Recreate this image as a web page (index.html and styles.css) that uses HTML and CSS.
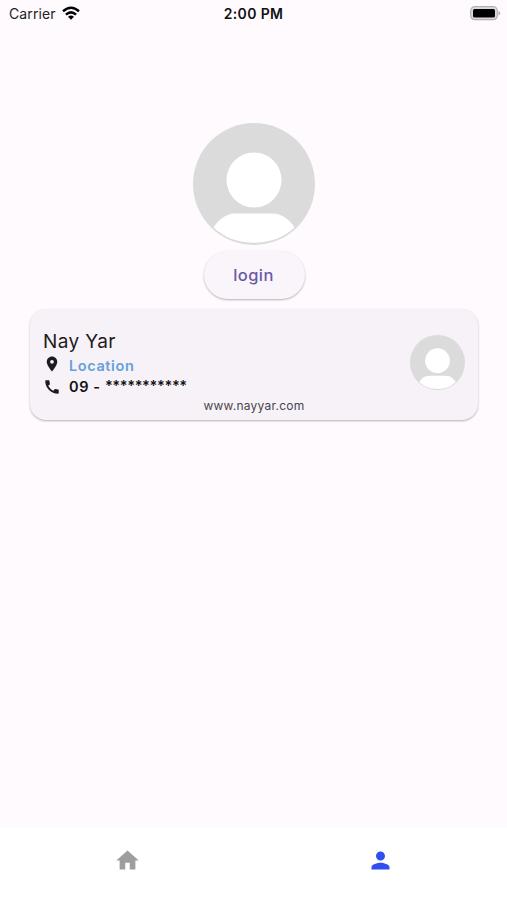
FILE: index.html
```html
<!DOCTYPE html>
<html lang="en">
<head>
<meta charset="utf-8">
<title>Profile</title>
<link rel="stylesheet" href="styles.css">
</head>
<body>
<svg class="defs" width="0" height="0" aria-hidden="true">
  <symbol id="avatar" viewBox="0 0 122 122">
    <circle cx="61" cy="61" r="61" fill="#dadbda"/>
    <circle cx="61" cy="57" r="27.500" fill="#fff"/>
    <path fill="#fff" d="M20.500 104.500C25 97 33 90.500 42 90.500H80C89 90.500 97 97 101.500 104.500C91 114.500 77 119.800 61 119.800S31 114.500 20.500 104.500Z"/>
  </symbol>
</svg>
<div class="screen">
  <header class="status">
    <div class="carrier"><span>Carrier</span>
      <svg class="wifi" viewBox="0 0 18 14"><g fill="none" stroke="#000" stroke-width="2.500"><path d="M1 5.200Q9-1.700 17 5.200"/><path d="M3.900 8.600Q9 4.200 14.100 8.600"/></g><path d="M6 10.700Q9 8.300 12 10.700L9 13.700Z"/></svg>
    </div>
    <div class="time">2:00 PM</div>
    <div class="power">
      <svg class="battery" viewBox="0 0 31 15"><rect x=".7" y=".7" width="26.600" height="13" rx="4" fill="#dedbde" stroke="#b2b0b2" stroke-width="1.200"/><rect x="3" y="3" width="22" height="8.500" rx="1.500"/><path d="M28.500 4.800Q32 7.200 28.500 9.700Z" fill="#b2b0b2"/></svg>
    </div>
  </header>
  <main class="content">
    <svg class="photo"><use href="#avatar"/></svg>
    <button class="login">login</button>
    <section class="card">
      <div class="info">
        <div class="name">Nay Yar</div>
        <div class="row location">
          <svg class="icon" viewBox="0 0 24 24"><path d="M12 2C8.130 2 5 5.130 5 9c0 5.250 7 13 7 13s7-7.750 7-13c0-3.870-3.130-7-7-7zm0 9.500a2.500 2.500 0 1 1 0-5 2.500 2.500 0 0 1 0 5z"/></svg>
          <span>Location</span>
        </div>
        <div class="row phone">
          <svg class="icon" viewBox="0 0 24 24"><path d="M20.010 15.380c-1.230 0-2.420-.2-3.530-.56a.977.977 0 0 0-1.010.24l-1.570 1.970c-2.830-1.350-5.480-3.900-6.890-6.830l1.950-1.660c.27-.28.350-.67.240-1.020-.37-1.110-.56-2.300-.56-3.530 0-.54-.45-.99-.99-.99H4.190C3.650 3 3 3.240 3 3.990 3 13.280 10.730 21 20.010 21c.71 0 .99-.63.990-1.180v-3.450c0-.54-.45-.99-.99-.99z"/></svg>
          <span>09 - <span class="mask">***********</span></span>
        </div>
      </div>
      <svg class="thumb"><use href="#avatar"/></svg>
      <div class="site">www.nayyar.com</div>
    </section>
  </main>
  <nav class="tabs">
    <svg class="tab" viewBox="0 0 24 24"><path d="M10 20v-6h4v6h5v-8h3L12 3 2 12h3v8z"/></svg>
    <svg class="tab active" viewBox="0 0 24 24"><path d="M12 12c2.210 0 4-1.790 4-4s-1.790-4-4-4-4 1.790-4 4 1.790 4 4 4zm0 2c-2.670 0-8 1.340-8 4v2h16v-2c0-2.660-5.330-4-8-4z"/></svg>
  </nav>
</div>
</body>
</html>
```
FILE: styles.css
```css
* { box-sizing: border-box; }
body { margin: 0; font-family: Inter, "Liberation Sans", sans-serif; color: #1d1b20; }
svg { display: block; flex: none; }
.defs { position: absolute; }
.screen { height: 900px; display: flex; flex-direction: column; background: #fefafe; }
.status {
  height: 28px; padding: 0 6px 0 9px; color: #222;
  display: grid; grid-template-columns: 1fr auto 1fr; align-items: center;
  font-size: 14px; line-height: 28px;
}
.carrier { display: flex; align-items: center; gap: 6px; letter-spacing: .1px; }
.wifi { width: 18px; height: 14px; margin-top: -2px; }
.time { font-weight: 600; color: #111; letter-spacing: .35px; margin-right: 3px; }
.power { display: flex; justify-content: flex-end; }
.battery { width: 31px; height: 15px; margin-top: -1px; }
.content { flex: 1; padding: 95px 28px 0 29px; display: flex; flex-direction: column; align-items: center; }
.photo { width: 122px; height: 122px; }
.login {
  width: 101px; height: 48px; margin-top: 6px; padding: 0 1px 0 0; border: 0; border-radius: 24px;
  background: #f9f5fb; color: #6b58a6; font: 500 16.500px/48px Inter, sans-serif; letter-spacing: .4px;
  box-shadow: 0 1px 2px rgba(0,0,0,.24), 0 1px 3px rgba(0,0,0,.06);
}
.card {
  width: 448px; height: 111px; margin-top: 10px; padding: 20px 13px 0; border-radius: 16px;
  background: #f6f2f8; box-shadow: 0 1px 2px rgba(0,0,0,.24), 0 1px 3px rgba(0,0,0,.06);
  display: grid; grid-template: 68px 18px / 1fr 55px;
}
.name { font-size: 19px; line-height: 26px; letter-spacing: .4px; }
.row { display: flex; align-items: center; gap: 8px; height: 21px; font-weight: 600; font-size: 14.500px; letter-spacing: .6px; white-space: nowrap; }
.icon { width: 18px; height: 18px; fill: #1d1b20; }
.location { padding-bottom: 3px; }
.location span { color: #66a0d8; padding-top: 3px; }
.phone { color: #111; }
.mask { letter-spacing: -.38px; line-height: 1; vertical-align: 1px; }
.thumb { width: 55px; height: 55px; margin-top: 6px; }
.site { grid-column: 1 / 3; text-align: center; font-size: 12px; line-height: 18px; letter-spacing: .25px; color: #49454f; }
.tabs { height: 72px; background: #fff; display: grid; grid-template-columns: 1fr 1fr; justify-items: center; padding: 19px 0 0 1px; }
.tab { width: 27px; height: 27px; fill: #9e9e9e; }
.active { fill: #304ff0; }
```
